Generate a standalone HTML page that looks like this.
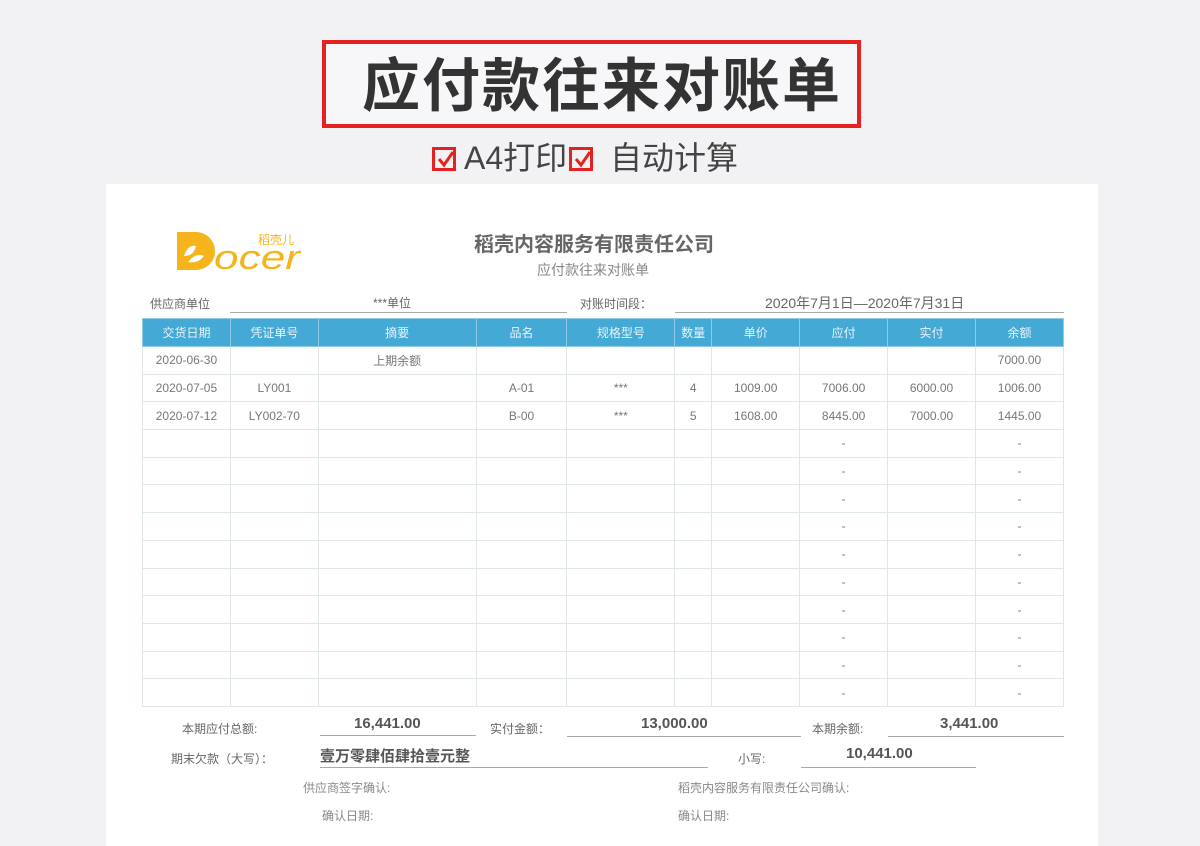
<!DOCTYPE html>
<html><head><meta charset="utf-8"><style>
*{margin:0;padding:0;box-sizing:border-box}
body{width:1200px;height:846px;background:#f2f2f5;position:relative;overflow:hidden;font-family:"Liberation Sans","Noto Sans CJK SC",sans-serif;color:#555}
.a{position:absolute;white-space:nowrap}
.redbox{left:322px;top:40px;width:539px;height:88px;border:4px solid #e42222;background:#f7f7f9}
.title{left:362px;top:54px;font-size:58px;font-weight:bold;color:#333;letter-spacing:2px;line-height:66px}
.sub{left:432px;top:138px;font-size:32px;color:#444;line-height:40px}
.cb{display:inline-block;width:24px;height:24px;border:3px solid #e42222;position:relative;vertical-align:-2px;margin-right:8px}
.cb svg{position:absolute;left:1px;top:0}
.paper{left:106px;top:184px;width:992px;height:662px;background:#fff}
table{position:absolute;left:142px;top:318px;border-collapse:collapse;width:922px;font-size:12px;color:#777}
td{border:1px solid #dfe6ea;height:27.7px;text-align:center;padding:0}
th{background:#45a9d6;color:#e8f4fa;font-weight:normal;height:28px;border:1px solid #8fcbe6;font-size:12px}
.ul{position:absolute;border-bottom:1px solid #aaa;height:1px}
.lab{font-size:12px;color:#666}
.num{font-size:15px;font-weight:bold;color:#555}
</style></head><body>
<div class="a redbox"></div>
<div class="a title">应付款往来对账单</div>
<div class="a sub"><span class="cb"><svg width="20" height="20" viewBox="0 0 20 20"><path d="M3 9 L8 15 L17 2" stroke="#e42222" stroke-width="3" fill="none"/></svg></span>A4打印<span class="cb" style="margin-left:2px"><svg width="20" height="20" viewBox="0 0 20 20"><path d="M3 9 L8 15 L17 2" stroke="#e42222" stroke-width="3" fill="none"/></svg></span> 自动计算</div>
<div class="a paper"></div>
<svg class="a" style="left:174px;top:226px" width="130" height="46" viewBox="0 0 130 46">
<path d="M3 6 H22 A19 19 0 0 1 22 44 H3 Z" fill="#f5b41c"/>
<path d="M10 30 Q14 18 22 20 Q20 30 10 30Z M14 36 Q22 26 30 30 Q24 38 14 36Z" fill="#fff"/>
<text x="40" y="43" font-family="Liberation Sans" font-size="34" fill="#f5b41c" font-style="italic" textLength="86" lengthAdjust="spacingAndGlyphs">ocer</text>
<text x="84" y="18" font-family="Noto Sans CJK SC" font-size="12" fill="#f5b41c">稻壳儿</text>
</svg>
<div class="a" style="left:474px;top:228px;font-size:20px;font-weight:bold;color:#666">稻壳内容服务有限责任公司</div>
<div class="a" style="left:537px;top:260px;font-size:14px;color:#888">应付款往来对账单</div>
<div class="a lab" style="left:150px;top:295px">供应商单位</div>
<div class="ul" style="left:230px;top:312px;width:337px"></div>
<div class="a lab" style="left:373px;top:294px">***单位</div>
<div class="a lab" style="left:580px;top:295px">对账时间段：</div>
<div class="ul" style="left:675px;top:312px;width:389px"></div>
<div class="a" style="left:765px;top:293px;font-size:14px;color:#666">2020年7月1日—2020年7月31日</div>
<table>
<tr><th style="width:88px">交货日期</th><th style="width:88px">凭证单号</th><th style="width:158px">摘要</th><th style="width:91px">品名</th><th style="width:108px">规格型号</th><th style="width:37px">数量</th><th style="width:88px">单价</th><th style="width:88px">应付</th><th style="width:88px">实付</th><th style="width:88px">余额</th></tr>
<tr><td>2020-06-30</td><td></td><td>上期余额</td><td></td><td></td><td></td><td></td><td></td><td></td><td>7000.00</td></tr>
<tr><td>2020-07-05</td><td>LY001</td><td></td><td>A-01</td><td>***</td><td>4</td><td>1009.00</td><td>7006.00</td><td>6000.00</td><td>1006.00</td></tr>
<tr><td>2020-07-12</td><td>LY002-70</td><td></td><td>B-00</td><td>***</td><td>5</td><td>1608.00</td><td>8445.00</td><td>7000.00</td><td>1445.00</td></tr>
<tr><td></td><td></td><td></td><td></td><td></td><td></td><td></td><td>-</td><td></td><td>-</td></tr>
<tr><td></td><td></td><td></td><td></td><td></td><td></td><td></td><td>-</td><td></td><td>-</td></tr>
<tr><td></td><td></td><td></td><td></td><td></td><td></td><td></td><td>-</td><td></td><td>-</td></tr>
<tr><td></td><td></td><td></td><td></td><td></td><td></td><td></td><td>-</td><td></td><td>-</td></tr>
<tr><td></td><td></td><td></td><td></td><td></td><td></td><td></td><td>-</td><td></td><td>-</td></tr>
<tr><td></td><td></td><td></td><td></td><td></td><td></td><td></td><td>-</td><td></td><td>-</td></tr>
<tr><td></td><td></td><td></td><td></td><td></td><td></td><td></td><td>-</td><td></td><td>-</td></tr>
<tr><td></td><td></td><td></td><td></td><td></td><td></td><td></td><td>-</td><td></td><td>-</td></tr>
<tr><td></td><td></td><td></td><td></td><td></td><td></td><td></td><td>-</td><td></td><td>-</td></tr>
<tr><td></td><td></td><td></td><td></td><td></td><td></td><td></td><td>-</td><td></td><td>-</td></tr>
</table>
<div class="a lab" style="left:182px;top:720px">本期应付总额:</div>
<div class="a num" style="left:354px;top:715px">16,441.00</div>
<div class="ul" style="left:320px;top:735px;width:156px"></div>
<div class="a lab" style="left:490px;top:720px">实付金额：</div>
<div class="a num" style="left:641px;top:715px">13,000.00</div>
<div class="ul" style="left:567px;top:736px;width:234px"></div>
<div class="a lab" style="left:812px;top:720px">本期余额:</div>
<div class="a num" style="left:940px;top:715px">3,441.00</div>
<div class="ul" style="left:888px;top:736px;width:176px"></div>
<div class="a lab" style="left:171px;top:750px">期末欠款（大写）：</div>
<div class="a" style="left:320px;top:745px;font-size:15px;font-weight:bold;color:#555">壹万零肆佰肆拾壹元整</div>
<div class="ul" style="left:320px;top:767px;width:388px"></div>
<div class="a lab" style="left:738px;top:750px">小写:</div>
<div class="a num" style="left:846px;top:745px">10,441.00</div>
<div class="ul" style="left:801px;top:767px;width:175px"></div>
<div class="a lab" style="left:303px;top:779px;color:#888">供应商签字确认:</div>
<div class="a lab" style="left:678px;top:779px;color:#888">稻壳内容服务有限责任公司确认:</div>
<div class="a lab" style="left:322px;top:807px;color:#888">确认日期:</div>
<div class="a lab" style="left:678px;top:807px;color:#888">确认日期:</div>
</body></html>
